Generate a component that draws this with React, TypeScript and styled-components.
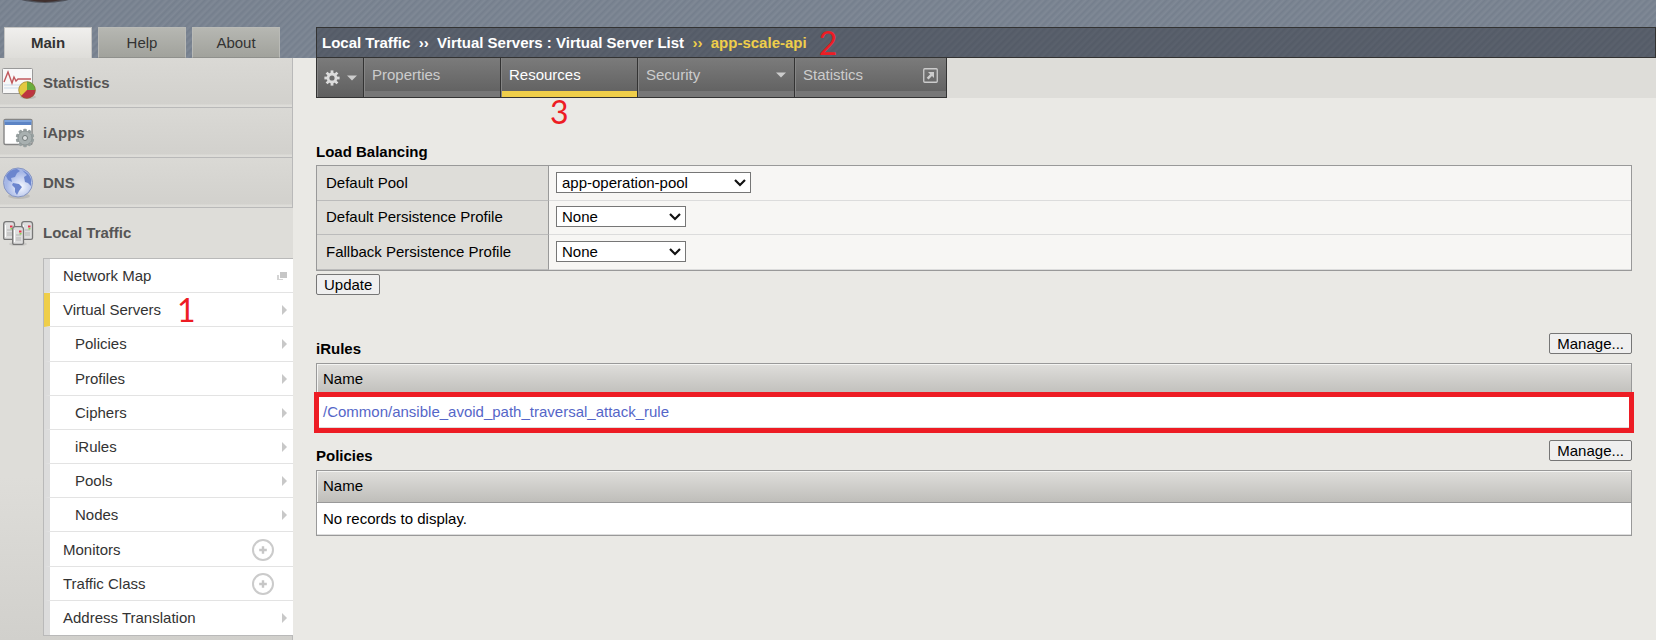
import React from "react";
import styled, { createGlobalStyle, css } from "styled-components";

const colors = {
  page: "#eae9e5",
  panel: "#deddd9",
  line: "#b9b9b9",
  dark: "#333333",
  yellow: "#efce4a",
  red: "#ed1c24",
};

const GlobalStyle = createGlobalStyle`
  * { box-sizing: border-box; }
  body {
    margin: 0;
    background: ${colors.page};
    color: #000;
    font: 15px/18px "Liberation Sans", Arial, sans-serif;
  }
  button, select { font: inherit; color: inherit; }
  a { color: inherit; text-decoration: none; }
`;

const stripes = (alpha: number) => css`
  background-image: repeating-linear-gradient(
    135deg,
    rgba(255, 255, 255, 0),
    rgba(255, 255, 255, ${alpha}) 3px,
    rgba(255, 255, 255, 0) 5px
  );
`;

const Page = styled.div`
  display: grid;
  grid-template-columns: 293px minmax(0, 1fr);
  grid-template-rows: 58px auto;
  min-height: 100vh;
`;

const Banner = styled.header`
  grid-column: 1 / -1;
  display: grid;
  grid-template-columns: subgrid;
  align-items: end;
  position: relative;
  background-color: #757f8d;
  ${stripes(0.08)}
`;

const Logo = styled.svg`
  position: absolute;
  left: 14px;
  top: 0;
`;

const ModeTabs = styled.nav`
  display: flex;
  gap: 6px;
  padding-left: 4px;
`;

const ModeTab = styled.button<{ $active?: boolean }>`
  width: 88px;
  height: 31px;
  padding: 0;
  border: 1px solid ${(p) => (p.$active ? "#c4c4c2" : "#b9bab6")};
  border-bottom: ${(p) => (p.$active ? "0" : "1px solid #8f908c")};
  background: ${(p) =>
    p.$active
      ? "linear-gradient(#f0efed, #deddd9)"
      : "linear-gradient(#b6b7b2, #a1a29c)"};
  color: #333;
  font-weight: ${(p) => (p.$active ? 700 : 400)};
`;

const Breadcrumb = styled.nav`
  display: flex;
  align-items: center;
  height: 31px;
  margin-left: 23px;
  padding-left: 5px;
  border: 1px solid ${colors.dark};
  background-color: #545b67;
  ${stripes(0.04)}
  color: #fff;
  font-weight: 700;
  white-space: pre;
`;

const Current = styled.span`
  color: ${colors.yellow};
`;

const Callout = styled.span`
  color: ${colors.red};
  font: 400 32px/28px Lato, sans-serif;
`;

const CrumbCallout = styled(Callout)`
  margin-left: 12px;
`;

const Sidebar = styled.aside`
  display: flex;
  flex-direction: column;
  background: linear-gradient(${colors.panel} 72%, #d1d0cc);
`;

const Section = styled.a<{ $open?: boolean }>`
  display: flex;
  align-items: center;
  gap: 7px;
  height: 50px;
  padding-left: 1px;
  color: #555;
  font-weight: 700;
  ${(p) =>
    !p.$open &&
    css`
      border-right: 1px solid ${colors.line};
      border-bottom: 1px solid ${colors.line};
      background: linear-gradient(#dad9d5, #d2d1cd 46px, #dddcd8 47px);
    `}
`;

const SubMenu = styled.ul`
  display: grid;
  grid-auto-rows: 1fr;
  min-height: 378px;
  margin: 0 0 0 43px;
  padding: 0;
  border: 1px solid ${colors.line};
  border-right: 0;
  background: #fff;
  list-style: none;
`;

const SubItem = styled.li<{ $active?: boolean; $nested?: boolean }>`
  display: flex;
  align-items: center;
  padding: 1px 6px 0 ${(p) => (p.$nested ? 25 : 13)}px;
  border-left: 6px solid ${(p) => (p.$active ? colors.yellow : "#dcdcdc")};
  border-bottom: 1px solid #e3e3e3;
  color: #333;
  &:last-child { border-bottom: 0; }
`;

const SubLink = styled.a`
  flex: 1;
`;

const MenuCallout = styled(Callout)`
  position: absolute;
  left: 177px;
`;

const AddButton = styled.button`
  display: flex;
  margin-right: 13px;
  padding: 0;
  border: 0;
  background: none;
`;

const SidebarEnd = styled.div`
  flex: 1;
  border-right: 1px solid ${colors.line};
`;

const Main = styled.main`
  min-width: 0;
`;

const TabStrip = styled.nav`
  display: flex;
  height: 40px;
  margin-left: 23px;
  background: #deddd9;
`;

const tabBase = css`
  display: flex;
  border: 0 solid ${colors.dark};
  border-width: 0 1px 1px 0;
  box-shadow: inset 1px 0 #858585;
`;

const GearButton = styled.button`
  ${tabBase}
  align-items: center;
  gap: 7px;
  width: 48px;
  padding: 1px 0 0 7px;
  border-left-width: 1px;
  background: linear-gradient(#7b7b7b, #5f5f5f);
`;

const Tab = styled.a<{ $active?: boolean; $size: number }>`
  ${tabBase}
  justify-content: space-between;
  align-items: center;
  width: ${(p) => p.$size}px;
  padding: 0 8px 5px 8px;
  background: linear-gradient(
    #7b7b7b,
    #636363 33px,
    ${(p) => (p.$active ? colors.yellow : "#777777")} 33px
  );
  color: ${(p) => (p.$active ? "#fff" : "#ccc")};
`;

const Content = styled.div`
  position: relative;
  padding: 0 24px 0 23px;
`;

const TabCallout = styled(Callout)`
  position: absolute;
  top: 0;
  left: 257px;
`;

const Block = styled.section`
  padding-top: 11px;
`;

const LoadBlock = styled(Block)`
  padding-top: 39px;
`;

const RulesBlock = styled(Block)`
  padding-top: 38px;
`;

const Heading = styled.h2`
  margin: 0;
  padding: 6px 0 4px;
  font-size: 15px;
  line-height: 18px;
`;

const HeadRow = styled.div`
  display: flex;
  align-items: flex-start;
  justify-content: space-between;
  height: 30px;

  ${Heading} { padding-top: 7px; }
`;

const Button = styled.button`
  height: 21px;
  padding: 0 7px;
  border: 1px solid #767676;
  border-radius: 2px;
  background: #efefef;
  line-height: 19px;
`;

const UpdateButton = styled(Button)`
  display: block;
  margin-top: 3px;
`;

const Form = styled.form`
  margin: 0;
`;

const Fields = styled.div`
  display: grid;
  grid-auto-rows: 1fr;
  min-height: 106px;
  border: 1px solid #999;
  background: #f7f6f4;
`;

const Field = styled.div`
  display: grid;
  grid-template-columns: 232px 1fr;
  align-items: center;
  border-bottom: 1px solid #dcdcdc;
`;

const FieldLabel = styled.label`
  display: flex;
  align-items: center;
  align-self: stretch;
  margin-bottom: -1px;
  padding-left: 9px;
  border-right: 1px solid #999;
  border-bottom: 1px solid #bbb;
  background: ${colors.panel};
`;

const SelectBox = styled.div<{ $size: number }>`
  position: relative;
  width: ${(p) => p.$size}px;
  height: 21px;
  margin: 0 0 1px 7px;

  svg {
    position: absolute;
    right: 5px;
    top: 7px;
    pointer-events: none;
  }
`;

const Select = styled.select`
  appearance: none;
  display: block;
  width: 100%;
  height: 100%;
  padding: 0 20px 0 5px;
  border: 1px solid #767676;
  border-radius: 0;
  background: #fff;
  line-height: 19px;
`;

const Table = styled.table`
  width: 100%;
  border: 1px solid #999;
  border-spacing: 0;
  background: #fff;
`;

const HeadCell = styled.th`
  height: 32px;
  padding: 0 6px 2px;
  border-bottom: 1px solid #999;
  background: linear-gradient(#dfdedb, #bfbeba);
  box-shadow: inset 1px 1px #f4f4f2;
  font-weight: 400;
  text-align: left;
`;

const Cell = styled.td`
  height: 32px;
  padding: 0 6px;
  border-bottom: 1px solid #ddd;
`;

const RuleCell = styled(Cell)`
  position: relative;
  color: #5566c8;
  &::after {
    content: "";
    position: absolute;
    inset: -4px -3px -6px;
    border: 5px solid ${colors.red};
    pointer-events: none;
  }
`;

const Arrow = () => (
  <svg width="5" height="10" viewBox="0 0 5 10" aria-hidden="true">
    <path d="M0 0L5 5L0 10Z" fill="#c8c8c8" />
  </svg>
);

const WindowsIcon = () => (
  <svg width="10" height="8" viewBox="0 0 10 8" aria-hidden="true">
    <path d="M3 0H10V6H3Z" fill="#c6c6c6" />
    <path d="M0 3H2V7H6V8H0Z" fill="#d4d4d4" />
  </svg>
);

const PlusIcon = () => (
  <svg width="22" height="22" viewBox="0 0 22 22" aria-hidden="true">
    <circle cx="11" cy="11" r="10" fill="none" stroke="#cbcbcb" strokeWidth="2" />
    <path d="M11 7.2V14.800M7.200 11H14.800" stroke="#c6c6c6" strokeWidth="2.400" />
  </svg>
);

const Chevron = () => (
  <svg width="12" height="8" viewBox="0 0 12 8" aria-hidden="true">
    <path d="M1 1L6 6L11 1" fill="none" stroke="#111" strokeWidth="2.200" />
  </svg>
);

const DownArrow = () => (
  <svg width="10" height="6" viewBox="0 0 10 6" aria-hidden="true">
    <path d="M0 .5H10L5 5.500Z" fill="#ccc" />
  </svg>
);

const GearIcon = () => (
  <svg width="16" height="16" viewBox="-8 -8 16 16" aria-hidden="true">
    <g fill="#dcdcdc">
      {[0, 45, 90, 135].map((a) => (
        <rect key={a} x="-1.4" y="-7.6" width="2.800" height="15.200" transform={`rotate(${a})`} />
      ))}
      <circle r="5.4" />
    </g>
    <circle r="2.6" fill="#6d6d6d" />
  </svg>
);

const PopOutIcon = () => (
  <svg width="15" height="15" viewBox="0 0 15 15" aria-hidden="true">
    <rect x=".75" y=".75" width="13.5" height="13.5" rx="1" fill="none" stroke="#ccc" strokeWidth="1.3" />
    <path d="M5 4H11V10L9 8L5.5 11.5L3.7 9.7L7.2 6.2Z" fill="#ccc" />
  </svg>
);

const StatisticsIcon = () => (
  <svg width="35" height="36" viewBox="0 0 35 36" aria-hidden="true">
    <ellipse cx="27" cy="32" rx="8" ry="2" fill="#999" opacity=".4" />
    <rect x="1.5" y="3.5" width="30" height="25" rx="1" fill="#f8f8f8" stroke="#999" />
    <path d="M3 20H31M3 23H22" stroke="#c9d9ea" />
    <path d="M3 17L7 7L11 18L13 12L15 16L17 14H30" fill="none" stroke="#c0585c" strokeWidth="1.4" />
    <circle cx="26" cy="25" r="8.5" fill="#e3c940" />
    <path d="M26 25V16.500A8.500 8.500 0 0 1 34.500 25Z" fill="#69ad3c" />
    <path d="M26 25H34.500A8.500 8.500 0 0 1 20 31Z" fill="#bd3440" />
    <circle cx="26" cy="25" r="8.300" fill="none" stroke="#7b6638" opacity=".5" />
  </svg>
);

const AppsIcon = () => (
  <svg width="35" height="36" viewBox="0 0 35 36" aria-hidden="true">
    <rect x="3" y="4.500" width="28" height="25" rx="1.500" fill="#fff" stroke="#858585" strokeWidth="1.400" />
    <path d="M3.500 5H30.500V10H3.500Z" fill="#5c84c5" />
    <path d="M3.500 5H30.500V7H3.500Z" fill="#7ea3da" />
    <g transform="translate(24 23)">
      <g fill="#98a1a1">
        {[0, 36, 72, 108, 144].map((a) => (
          <rect key={a} x="-1.800" y="-9.300" width="3.600" height="18.600" rx="1" transform={`rotate(${a})`} />
        ))}
      </g>
      <circle r="7" fill="#a8b0b0" stroke="#899191" strokeWidth=".800" />
      <circle r="2.500" fill="#dde0e0" stroke="#737b7b" />
    </g>
  </svg>
);

const GlobeIcon = () => (
  <svg width="35" height="36" viewBox="0 0 35 36" aria-hidden="true">
    <defs>
      <radialGradient id="globe" cx=".6" cy=".65">
        <stop offset="0" stopColor="#f6f9ff" />
        <stop offset="1" stopColor="#a6b7e6" />
      </radialGradient>
    </defs>
    <ellipse cx="18" cy="31" rx="11" ry="3" fill="#999" opacity=".4" />
    <circle cx="17" cy="17.500" r="14.500" fill="url(#globe)" stroke="#8796c2" />
    <g fill="#6c86ce">
      <path d="M5 11Q9 4 16 4L19 6L16 8L14 12L10 13L11 17L7 15Z" />
      <path d="M12 18L18 19L21 22L18 26L16 30L14 27V23L11 20Z" />
      <path d="M21 5Q28 8 30 14L30 21L27 18L24 17L23 12L26 10Z" />
    </g>
  </svg>
);

const Server = ({ x, y }: { x: number; y: number }) => (
  <g transform={`translate(${x} ${y})`}>
    <path d="M.7 3Q1 .7 3 .7H9Q11.300 .7 11.500 3V17Q11.500 18.300 10 18.300H2Q.7 18.300 .7 17Z" fill="#dedede" stroke="#777" strokeWidth="1.300" />
    <path d="M2.500 4V16" stroke="#fff" />
    <path d="M4 9H9M4 12H9M4 14H9" stroke="#b4b4b4" />
    <rect x="7" y="4.500" width="2.500" height="2" fill="#e0384c" />
    <rect x="7.500" y="7" width="2" height="1.500" fill="#86cf52" />
  </g>
);

const TrafficIcon = () => (
  <svg width="35" height="36" viewBox="0 0 35 36" aria-hidden="true">
    <ellipse cx="17" cy="29" rx="9" ry="2" fill="#999" opacity=".3" />
    <Server x={2} y={6} />
    <Server x={20} y={6} />
    <Server x={11} y={11} />
  </svg>
);

type MenuEntry = { label: string; kind?: "window" | "add"; nested?: boolean; active?: boolean };

const menu: MenuEntry[] = [
  { label: "Network Map", kind: "window" },
  { label: "Virtual Servers", active: true },
  { label: "Policies", nested: true },
  { label: "Profiles", nested: true },
  { label: "Ciphers", nested: true },
  { label: "iRules", nested: true },
  { label: "Pools", nested: true },
  { label: "Nodes", nested: true },
  { label: "Monitors", kind: "add" },
  { label: "Traffic Class", kind: "add" },
  { label: "Address Translation" },
];

const fields = [
  { id: "pool", label: "Default Pool", value: "app-operation-pool", size: 195 },
  { id: "persistence", label: "Default Persistence Profile", value: "None", size: 130 },
  { id: "fallback", label: "Fallback Persistence Profile", value: "None", size: 130 },
];

export default function App() {
  return (
    <>
      <GlobalStyle />
      <Page>
        <Banner>
          <Logo width="64" height="4" viewBox="0 0 64 4" aria-hidden="true">
            <ellipse cx="31" cy="-20" rx="48" ry="23" fill="#4f525a" />
            <ellipse cx="31" cy="-20" rx="40" ry="22" fill="#40302e" />
          </Logo>
          <ModeTabs>
            <ModeTab $active>Main</ModeTab>
            <ModeTab>Help</ModeTab>
            <ModeTab>About</ModeTab>
          </ModeTabs>
          <Breadcrumb>
            <a href="#local">Local Traffic</a>
            <span>{"  ››  "}</span>
            <a href="#list">Virtual Servers : Virtual Server List</a>
            <Current>{"  ››  app-scale-api"}</Current>
            <CrumbCallout>2</CrumbCallout>
          </Breadcrumb>
        </Banner>

        <Sidebar>
          <Section href="#statistics"><StatisticsIcon />Statistics</Section>
          <Section href="#iapps"><AppsIcon />iApps</Section>
          <Section href="#dns"><GlobeIcon />DNS</Section>
          <Section href="#traffic" $open><TrafficIcon />Local Traffic</Section>
          <SubMenu>
            {menu.map((m) => (
              <SubItem key={m.label} $active={m.active} $nested={m.nested}>
                <SubLink href="#item">{m.label}</SubLink>
                {m.active && <MenuCallout>1</MenuCallout>}
                {m.kind === "window" && <WindowsIcon />}
                {m.kind === "add" && (
                  <AddButton aria-label={`Add ${m.label}`}><PlusIcon /></AddButton>
                )}
                {!m.kind && <Arrow />}
              </SubItem>
            ))}
          </SubMenu>
          <SidebarEnd />
        </Sidebar>

        <Main>
          <TabStrip>
            <GearButton aria-label="Options"><GearIcon /><DownArrow /></GearButton>
            <Tab href="#properties" $size={137}>Properties</Tab>
            <Tab href="#resources" $size={137} $active>Resources</Tab>
            <Tab href="#security" $size={157}>Security<DownArrow /></Tab>
            <Tab href="#stats" $size={152}>Statistics<PopOutIcon /></Tab>
          </TabStrip>
          <Content>
            <TabCallout>3</TabCallout>
            <LoadBlock>
              <Heading>Load Balancing</Heading>
              <Form onSubmit={(e) => e.preventDefault()}>
                <Fields>
                  {fields.map((f) => (
                    <Field key={f.id}>
                      <FieldLabel htmlFor={f.id}>{f.label}</FieldLabel>
                      <SelectBox $size={f.size}>
                        <Select id={f.id}>
                          <option>{f.value}</option>
                        </Select>
                        <Chevron />
                      </SelectBox>
                    </Field>
                  ))}
                </Fields>
                <UpdateButton>Update</UpdateButton>
              </Form>
            </LoadBlock>
            <RulesBlock>
              <HeadRow>
                <Heading>iRules</Heading>
                <Button>Manage...</Button>
              </HeadRow>
              <Table>
                <thead><tr><HeadCell scope="col">Name</HeadCell></tr></thead>
                <tbody>
                  <tr>
                    <RuleCell>
                      <a href="#rule">/Common/ansible_avoid_path_traversal_attack_rule</a>
                    </RuleCell>
                  </tr>
                </tbody>
              </Table>
            </RulesBlock>
            <Block>
              <HeadRow>
                <Heading>Policies</Heading>
                <Button>Manage...</Button>
              </HeadRow>
              <Table>
                <thead><tr><HeadCell scope="col">Name</HeadCell></tr></thead>
                <tbody><tr><Cell>No records to display.</Cell></tr></tbody>
              </Table>
            </Block>
          </Content>
        </Main>
      </Page>
    </>
  );
}
